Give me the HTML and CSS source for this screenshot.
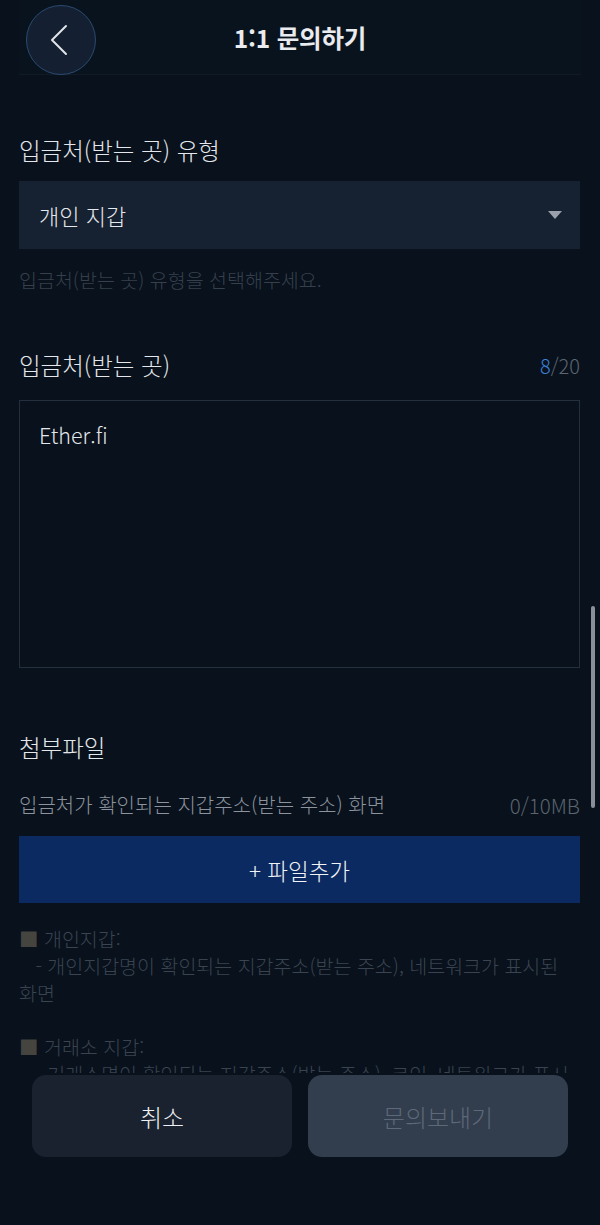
FILE: index.html
```html
<!DOCTYPE html>
<html lang="ko">
<head>
<meta charset="utf-8">
<title>1:1 문의하기</title>
<link rel="stylesheet" href="styles.css">
</head>
<body>
<div class="app">
<header class="header">
  <button class="back-btn" aria-label="뒤로">
    <svg width="18" height="32" viewBox="0 0 18 32"><path d="M16 2 L2 16 L16 30" fill="none" stroke="#dfe3e8" stroke-width="2" stroke-linecap="round" stroke-linejoin="round"/></svg>
  </button>
  <h1 class="title">1:1 문의하기</h1>
  <span class="spacer"></span>
</header>

<main class="content">
  <section class="field field-type">
    <div class="label">입금처(받는 곳) 유형</div>
    <div class="select">
      <span>개인 지갑</span>
      <svg class="caret" width="14" height="8" viewBox="0 0 14 8"><path d="M0 0 H14 L7 8 Z" fill="#9aa1aa"/></svg>
    </div>
    <div class="helper">입금처(받는 곳) 유형을 선택해주세요.</div>
  </section>

  <section class="field field-dest">
    <div class="label-row">
      <div class="label">입금처(받는 곳)</div>
      <div class="counter"><span class="count-on">8</span>/20</div>
    </div>
    <div class="textarea">Ether.fi</div>
  </section>

  <section class="field field-file">
    <div class="label">첨부파일</div>
    <div class="file-row">
      <span>입금처가 확인되는 지갑주소(받는 주소) 화면</span>
      <span class="file-size">0/10MB</span>
    </div>
    <button class="add-file">+ 파일추가</button>
    <p class="note"><span class="sq">■</span> 개인지갑:<br>&nbsp;&nbsp;&nbsp;- 개인지갑명이 확인되는 지갑주소(받는 주소), 네트워크가 표시된 화면</p>
    <p class="note"><span class="sq">■</span> 거래소 지갑:<br>&nbsp;&nbsp;&nbsp;- 거래소명이 확인되는 지갑주소(받는 주소), 코인, 네트워크가 표시된 화면</p>
  </section>
</main>

<footer class="footer">
  <button class="btn btn-cancel">취소</button>
  <button class="btn btn-send">문의보내기</button>
</footer>

<div class="scrollbar"></div>
</div>
</body>
</html>
```

FILE: styles.css
```css
* { box-sizing: border-box; }
html, body {
  margin: 0;
  padding: 0;
  background: #08111c;
  font-family: "Noto Sans CJK KR", "Noto Sans", sans-serif;
  font-weight: 300;
  color: #e4e7eb;
}
button { font-family: inherit; font-weight: 300; border: 0; cursor: pointer; }

.app {
  position: relative;
  height: 1225px;
  overflow: hidden;
  display: flex;
  flex-direction: column;
}

.header {
  flex: none;
  margin: 0 19px;
  height: 75px;
  background: #09131e;
  border-bottom: 1px solid #111b27;
  display: grid;
  grid-template-columns: 1fr auto 1fr;
  align-items: start;
}
.back-btn {
  margin: 5px 0 0 7px;
  width: 70px;
  height: 70px;
  border-radius: 50%;
  background: #142032;
  border: 1.5px solid #2a4a70;
  display: flex;
  align-items: center;
  justify-content: center;
  padding: 0 4px 0 0;
}
.title {
  margin: 0;
  align-self: center;
  font-size: 24.5px;
  font-weight: 700;
  color: #e9ebef;
  letter-spacing: -0.2px;
}

.content {
  flex: none;
  height: 998px;
  overflow: hidden;
  padding: 0 20px 0 19px;
}
.field-type { padding-top: 60px; }
.label {
  font-size: 23.5px;
  line-height: 30px;
  color: #e4e7eb;
}
.select {
  margin-top: 16px;
  height: 68px;
  background: #162131;
  display: flex;
  align-items: center;
  justify-content: space-between;
  padding: 0 18px 0 20px;
  font-size: 22px;
  color: #e4e7eb;
}
.helper {
  margin-top: 18px;
  font-size: 19.5px;
  line-height: 26px;
  color: #36404c;
}

.field-dest { padding-top: 57px; }
.label-row {
  display: flex;
  justify-content: space-between;
  align-items: center;
}
.counter {
  font-size: 20px;
  color: #5c6570;
}
.count-on { color: #3b7fd6; }
.textarea {
  margin-top: 20px;
  height: 268px;
  border: 1.5px solid #232f3d;
  padding: 20px 19px;
  font-size: 21.5px;
  line-height: 28px;
  color: #e4e7eb;
}

.field-file { padding-top: 64px; }
.file-row {
  margin-top: 30px;
  display: flex;
  justify-content: space-between;
  align-items: center;
  font-size: 20px;
  line-height: 26px;
  color: #8c939c;
}
.file-size { color: #5b646f; font-size: 20.5px; }
.add-file {
  display: block;
  width: 100%;
  margin-top: 18px;
  height: 67px;
  background: #0b2a62;
  color: #f1f3f6;
  font-size: 22.5px;
}
.note {
  margin: 22px 0 0;
  font-size: 19.5px;
  line-height: 27px;
  color: #3a4450;
}
.note + .note { margin-top: 27px; }
.sq { color: #46443f; }

.scrollbar {
  position: absolute;
  left: 591px;
  top: 606px;
  width: 4px;
  height: 202px;
  border-radius: 2px;
  background: #8a9099;
}

.footer {
  flex: 1;
  background: #08111c;
  display: flex;
  gap: 16px;
  padding: 2px 32px 0 32px;
  align-items: flex-start;
}
.btn {
  flex: 1;
  height: 82px;
  border-radius: 14px;
  font-size: 24px;
}
.btn-cancel { background: #1a2230; color: #eef0f3; }
.btn-send { background: #323d4d; color: #5d6878; }
```
